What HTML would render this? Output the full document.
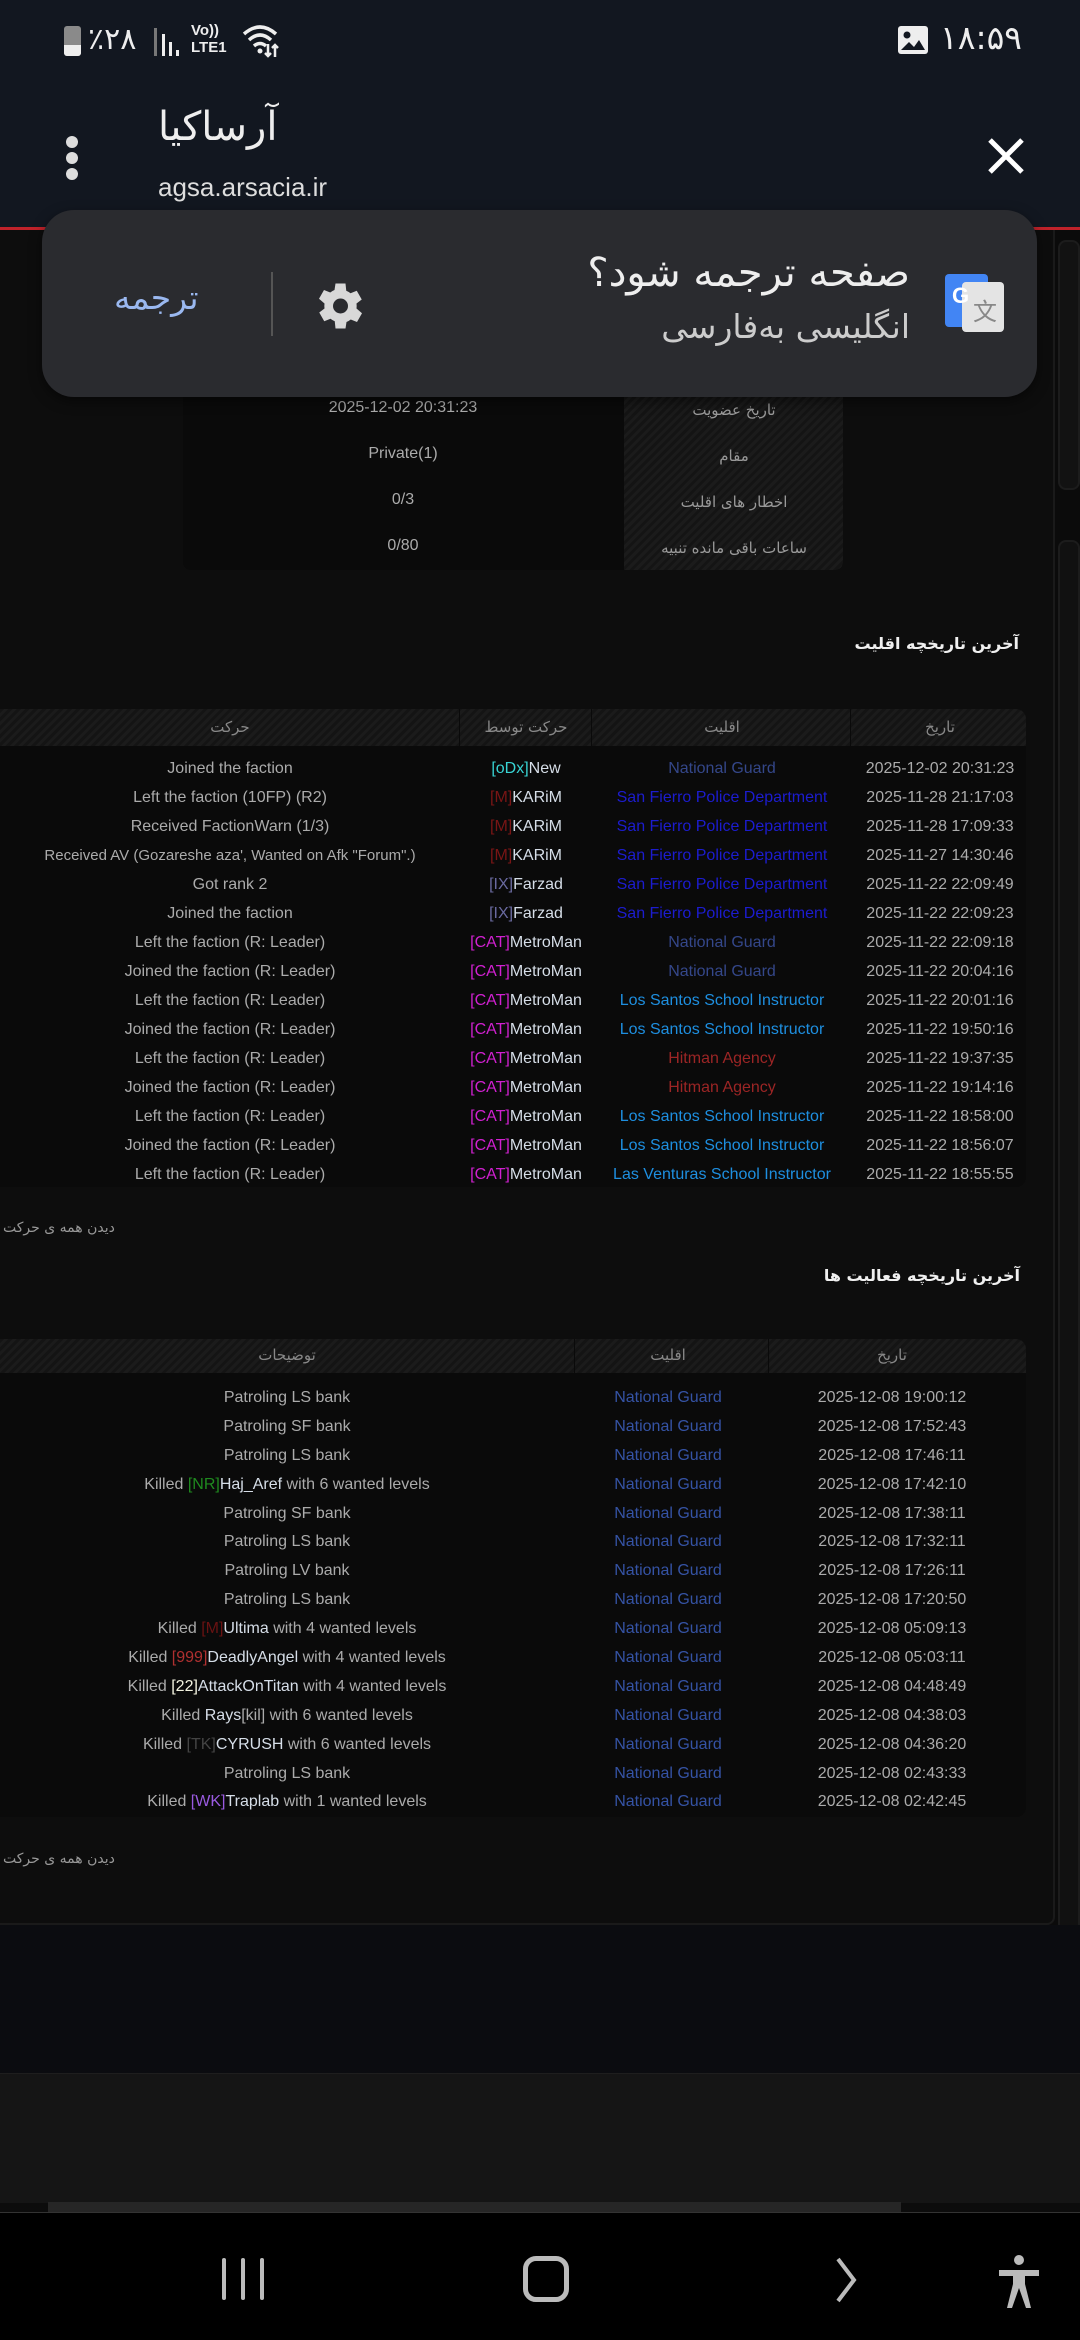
<!DOCTYPE html>
<html><head><meta charset="utf-8"><style>
*{margin:0;padding:0;box-sizing:border-box}
body{width:1080px;height:2340px;background:#0c0c0c;font-family:"Liberation Sans","Noto Sans CJK SC",sans-serif;position:relative;overflow:hidden;color:#ababab}
.a{position:absolute}
.c{position:absolute;transform:translateX(-50%);white-space:nowrap;font-size:16px;line-height:20px}
.fa{font-family:"DejaVu Sans","Noto Sans CJK SC",sans-serif}
.stripe{background:repeating-linear-gradient(135deg,#141414 0 3px,#1b1b1b 3px 6px)}
.n{color:#d6dee8}
</style></head><body>
<div class="a" style="left:0;top:228px;width:1080px;height:1700px;background:linear-gradient(90deg,#0b0b0b,#101010 50%,#0b0b0b)"></div>
<div class="a" style="left:0;top:228px;width:1055px;height:1697px;border-right:2px solid #1a1a1a;border-bottom:2px solid #1a1a1a;border-radius:0 0 8px 0;background:#0d0d0d"></div>
<div class="a" style="left:1058px;top:240px;width:22px;height:250px;border:2px solid #1c1c1c;border-radius:8px;background:#121212"></div>
<div class="a" style="left:1058px;top:540px;width:22px;height:1500px;border:2px solid #1c1c1c;border-radius:8px;background:#111"></div>
<div class="a" style="left:0;top:1925px;width:1080px;height:150px;background:#0b0c10"></div>
<div class="a" style="left:0;top:2073px;width:1080px;height:130px;background:#151515;border-top:1px solid #1e1e1e"></div>
<div class="a" style="left:48px;top:2202px;width:853px;height:10px;background:#262626"></div>

<div class="a" style="left:0;top:0;width:1080px;height:228px;background:#121720"></div>
<div class="a" style="left:0;top:227px;width:1080px;height:3px;background:#c0222a"></div>
<div class="a" style="left:64px;top:26px;width:17px;height:30px;border-radius:3px;background:#8a8a8a"></div>
<div class="a" style="left:64px;top:45px;width:17px;height:11px;background:#eee;border-radius:0 0 3px 3px"></div>
<div class="a fa" style="left:88px;top:22px;font-size:30px;color:#eee">٪۲۸</div>
<div class="a" style="left:154px;top:28px;width:3px;height:28px;background:#777"></div>
<div class="a" style="left:162px;top:34px;width:3px;height:22px;background:#eee"></div>
<div class="a" style="left:169px;top:42px;width:3px;height:14px;background:#eee"></div>
<div class="a" style="left:176px;top:50px;width:3px;height:6px;background:#eee"></div>
<div class="a" style="left:191px;top:22px;font-size:15px;font-weight:bold;color:#eee;line-height:17px">Vo))<br>LTE1</div>
<svg class="a" style="left:242px;top:24px" width="42" height="36" viewBox="0 0 42 36"><path d="M2 10 Q18 -4 34 10 M7 16 Q18 6 29 16 M12 22 Q18 17 24 22" stroke="#eee" stroke-width="3.5" fill="none"/><circle cx="18" cy="27" r="2.5" fill="#eee"/><path d="M26 20v12 M23 29l3 3 3-3 M33 33V21 M30 24l3-3 3 3" stroke="#eee" stroke-width="2.5" fill="none"/></svg>
<div class="a" style="left:898px;top:26px;width:30px;height:28px;border-radius:3px;background:#eee"></div>
<svg class="a" style="left:898px;top:26px" width="30" height="28"><circle cx="9" cy="9" r="3.5" fill="#121720"/><path d="M3 24l8-8 5 5 5-7 6 10z" fill="#121720"/></svg>
<div class="a fa" style="left:940px;top:18px;font-size:33px;color:#eee">۱۸:۵۹</div>
<div class="a" style="left:66px;top:136px;width:12px;height:12px;border-radius:6px;background:#ddd"></div>
<div class="a" style="left:66px;top:152px;width:12px;height:12px;border-radius:6px;background:#ddd"></div>
<div class="a" style="left:66px;top:168px;width:12px;height:12px;border-radius:6px;background:#ddd"></div>
<div class="a fa" style="left:158px;top:104px;font-size:40px;color:#eee;direction:rtl">آرساکیا</div>
<div class="a" style="left:158px;top:172px;font-size:26px;color:#ddd">agsa.arsacia.ir</div>
<svg class="a" style="left:986px;top:136px" width="40" height="40"><path d="M4 4L36 36M36 4L4 36" stroke="#fff" stroke-width="5"/></svg>

<div class="a" style="left:183px;top:380px;width:660px;height:190px;background:#0a0a0a;border-radius:0 0 8px 8px"></div>
<div class="a stripe" style="left:624px;top:380px;width:219px;height:190px;border-radius:0 0 8px 0"></div>
<div class="c" style="left:403px;top:398px">2025-12-02 20:31:23</div>
<div class="c" style="left:403px;top:444px">Private(1)</div>
<div class="c" style="left:403px;top:490px">0/3</div>
<div class="c" style="left:403px;top:536px">0/80</div>
<div class="c fa" style="left:734px;top:400px;font-size:15px;color:#999">تاریخ عضویت</div>
<div class="c fa" style="left:734px;top:446px;font-size:15px;color:#999">مقام</div>
<div class="c fa" style="left:734px;top:492px;font-size:15px;color:#999">اخطار های اقلیت</div>
<div class="c fa" style="left:734px;top:538px;font-size:15px;color:#999">ساعات باقی مانده تنبیه</div>

<div class="a" style="left:42px;top:210px;width:995px;height:187px;background:#2a2b2f;border-radius:32px;box-shadow:0 4px 12px rgba(0,0,0,.5)"></div>
<div class="a" style="left:945px;top:274px;width:43px;height:53px;background:#4285f4;border-radius:4px"></div>
<div class="a" style="left:962px;top:282px;width:42px;height:50px;background:#e4e4e4;border-radius:4px"></div>
<div class="a" style="left:952px;top:283px;font-size:22px;font-weight:bold;color:#fff">G</div>
<div class="a" style="left:973px;top:292px;font-size:24px;color:#888">文</div>
<div class="a fa" style="left:560px;top:250px;width:350px;text-align:right;direction:rtl;font-size:40px;color:#eee">صفحه ترجمه شود؟</div>
<div class="a fa" style="left:560px;top:307px;width:350px;text-align:right;direction:rtl;font-size:33px;color:#ccc">انگلیسی به‌فارسی</div>
<svg class="a" style="left:308px;top:276px" width="60" height="60" viewBox="0 0 24 24"><path fill="#d8d8d8" d="M19.4 13a7.5 7.5 0 000-2l2.1-1.6-2-3.5-2.5 1a7 7 0 00-1.7-1L15 3h-4l-.4 2.6a7 7 0 00-1.7 1l-2.5-1-2 3.5L6.6 11a7.5 7.5 0 000 2l-2.1 1.6 2 3.5 2.5-1a7 7 0 001.7 1L11 21h4l.4-2.6a7 7 0 001.7-1l2.5 1 2-3.5z"/><circle cx="13" cy="12" r="3" fill="#2a2b2f"/></svg>
<div class="a" style="left:271px;top:272px;width:2px;height:64px;background:#555"></div>
<div class="a fa" style="left:114px;top:278px;font-size:33px;color:#9ab8f0">ترجمه</div>

<div class="a fa" style="left:760px;top:634px;width:259px;text-align:right;direction:rtl;font-size:16px;font-weight:bold;color:#f0f0f0">آخرین تاریخچه اقلیت</div>
<div class="a" style="left:0;top:709px;width:1026px;height:478px;background:#0a0a0a;border-radius:0 10px 10px 0"></div>
<div class="a stripe" style="left:0;top:709px;width:1026px;height:37px;border-radius:0 10px 0 0"></div>
<div class="a" style="left:459px;top:709px;width:1px;height:37px;background:#0a0a0a"></div>
<div class="a" style="left:591px;top:709px;width:1px;height:37px;background:#0a0a0a"></div>
<div class="a" style="left:850px;top:709px;width:1px;height:37px;background:#0a0a0a"></div>
<div class="c fa" style="left:230px;top:717px;font-size:15px;color:#888">حرکت</div>
<div class="c fa" style="left:526px;top:717px;font-size:15px;color:#888">حرکت توسط</div>
<div class="c fa" style="left:722px;top:717px;font-size:15px;color:#888">اقلیت</div>
<div class="c fa" style="left:940px;top:717px;font-size:15px;color:#888">تاریخ</div>

<div class="a" style="left:0;top:759px;width:1026px">
<div style="position:relative;height:29px"><span class="c" style="left:230px">Joined the faction</span><span class="c" style="left:526px"><span style="color:#38d4d4">[oDx]</span><span class="n">New</span></span><span class="c" style="left:722px;color:#34478a">National Guard</span><span class="c" style="left:940px">2025-12-02 20:31:23</span></div>
<div style="position:relative;height:29px"><span class="c" style="left:230px">Left the faction (10FP) (R2)</span><span class="c" style="left:526px"><span style="color:#7a1515">[M]</span><span class="n">KARiM</span></span><span class="c" style="left:722px;color:#1c1ccf">San Fierro Police Department</span><span class="c" style="left:940px">2025-11-28 21:17:03</span></div>
<div style="position:relative;height:29px"><span class="c" style="left:230px">Received FactionWarn (1/3)</span><span class="c" style="left:526px"><span style="color:#7a1515">[M]</span><span class="n">KARiM</span></span><span class="c" style="left:722px;color:#1c1ccf">San Fierro Police Department</span><span class="c" style="left:940px">2025-11-28 17:09:33</span></div>
<div style="position:relative;height:29px"><span class="c" style="left:230px;font-size:15px">Received AV (Gozareshe aza', Wanted on Afk "Forum".)</span><span class="c" style="left:526px"><span style="color:#7a1515">[M]</span><span class="n">KARiM</span></span><span class="c" style="left:722px;color:#1c1ccf">San Fierro Police Department</span><span class="c" style="left:940px">2025-11-27 14:30:46</span></div>
<div style="position:relative;height:29px"><span class="c" style="left:230px">Got rank 2</span><span class="c" style="left:526px"><span style="color:#6a6aa0">[IX]</span><span class="n">Farzad</span></span><span class="c" style="left:722px;color:#1c1ccf">San Fierro Police Department</span><span class="c" style="left:940px">2025-11-22 22:09:49</span></div>
<div style="position:relative;height:29px"><span class="c" style="left:230px">Joined the faction</span><span class="c" style="left:526px"><span style="color:#6a6aa0">[IX]</span><span class="n">Farzad</span></span><span class="c" style="left:722px;color:#1c1ccf">San Fierro Police Department</span><span class="c" style="left:940px">2025-11-22 22:09:23</span></div>
<div style="position:relative;height:29px"><span class="c" style="left:230px">Left the faction (R: Leader)</span><span class="c" style="left:526px"><span style="color:#d020d0">[CAT]</span><span class="n">MetroMan</span></span><span class="c" style="left:722px;color:#34478a">National Guard</span><span class="c" style="left:940px">2025-11-22 22:09:18</span></div>
<div style="position:relative;height:29px"><span class="c" style="left:230px">Joined the faction (R: Leader)</span><span class="c" style="left:526px"><span style="color:#d020d0">[CAT]</span><span class="n">MetroMan</span></span><span class="c" style="left:722px;color:#34478a">National Guard</span><span class="c" style="left:940px">2025-11-22 20:04:16</span></div>
<div style="position:relative;height:29px"><span class="c" style="left:230px">Left the faction (R: Leader)</span><span class="c" style="left:526px"><span style="color:#d020d0">[CAT]</span><span class="n">MetroMan</span></span><span class="c" style="left:722px;color:#1e8fe0">Los Santos School Instructor</span><span class="c" style="left:940px">2025-11-22 20:01:16</span></div>
<div style="position:relative;height:29px"><span class="c" style="left:230px">Joined the faction (R: Leader)</span><span class="c" style="left:526px"><span style="color:#d020d0">[CAT]</span><span class="n">MetroMan</span></span><span class="c" style="left:722px;color:#1e8fe0">Los Santos School Instructor</span><span class="c" style="left:940px">2025-11-22 19:50:16</span></div>
<div style="position:relative;height:29px"><span class="c" style="left:230px">Left the faction (R: Leader)</span><span class="c" style="left:526px"><span style="color:#d020d0">[CAT]</span><span class="n">MetroMan</span></span><span class="c" style="left:722px;color:#9c2525">Hitman Agency</span><span class="c" style="left:940px">2025-11-22 19:37:35</span></div>
<div style="position:relative;height:29px"><span class="c" style="left:230px">Joined the faction (R: Leader)</span><span class="c" style="left:526px"><span style="color:#d020d0">[CAT]</span><span class="n">MetroMan</span></span><span class="c" style="left:722px;color:#9c2525">Hitman Agency</span><span class="c" style="left:940px">2025-11-22 19:14:16</span></div>
<div style="position:relative;height:29px"><span class="c" style="left:230px">Left the faction (R: Leader)</span><span class="c" style="left:526px"><span style="color:#d020d0">[CAT]</span><span class="n">MetroMan</span></span><span class="c" style="left:722px;color:#1e8fe0">Los Santos School Instructor</span><span class="c" style="left:940px">2025-11-22 18:58:00</span></div>
<div style="position:relative;height:29px"><span class="c" style="left:230px">Joined the faction (R: Leader)</span><span class="c" style="left:526px"><span style="color:#d020d0">[CAT]</span><span class="n">MetroMan</span></span><span class="c" style="left:722px;color:#1e8fe0">Los Santos School Instructor</span><span class="c" style="left:940px">2025-11-22 18:56:07</span></div>
<div style="position:relative;height:29px"><span class="c" style="left:230px">Left the faction (R: Leader)</span><span class="c" style="left:526px"><span style="color:#d020d0">[CAT]</span><span class="n">MetroMan</span></span><span class="c" style="left:722px;color:#1e8fe0">Las Venturas School Instructor</span><span class="c" style="left:940px">2025-11-22 18:55:55</span></div>
</div>
<div class="a fa" style="left:3px;top:1220px;font-size:14px;color:#999;direction:rtl">دیدن همه ی حرکت</div>

<div class="a fa" style="left:700px;top:1266px;width:320px;text-align:right;direction:rtl;font-size:16px;font-weight:bold;color:#f0f0f0">آخرین تاریخچه فعالیت ها</div>
<div class="a" style="left:0;top:1339px;width:1026px;height:478px;background:#0a0a0a;border-radius:0 10px 10px 0"></div>
<div class="a stripe" style="left:0;top:1339px;width:1026px;height:34px;border-radius:0 10px 0 0"></div>
<div class="a" style="left:574px;top:1339px;width:1px;height:34px;background:#0a0a0a"></div>
<div class="a" style="left:768px;top:1339px;width:1px;height:34px;background:#0a0a0a"></div>
<div class="c fa" style="left:287px;top:1345px;font-size:15px;color:#888">توضیحات</div>
<div class="c fa" style="left:668px;top:1345px;font-size:15px;color:#888">اقلیت</div>
<div class="c fa" style="left:892px;top:1345px;font-size:15px;color:#888">تاریخ</div>

<div class="a" style="left:0;top:1388px;width:1026px">
<div style="position:relative;height:28.9px"><span class="c" style="left:287px">Patroling LS bank</span><span class="c" style="left:668px;color:#3553a5">National Guard</span><span class="c" style="left:892px">2025-12-08 19:00:12</span></div>
<div style="position:relative;height:28.9px"><span class="c" style="left:287px">Patroling SF bank</span><span class="c" style="left:668px;color:#3553a5">National Guard</span><span class="c" style="left:892px">2025-12-08 17:52:43</span></div>
<div style="position:relative;height:28.9px"><span class="c" style="left:287px">Patroling LS bank</span><span class="c" style="left:668px;color:#3553a5">National Guard</span><span class="c" style="left:892px">2025-12-08 17:46:11</span></div>
<div style="position:relative;height:28.9px"><span class="c" style="left:287px">Killed <span style="color:#1f8a1f">[NR]</span><span class="n">Haj_Aref</span> with 6 wanted levels</span><span class="c" style="left:668px;color:#3553a5">National Guard</span><span class="c" style="left:892px">2025-12-08 17:42:10</span></div>
<div style="position:relative;height:28.9px"><span class="c" style="left:287px">Patroling SF bank</span><span class="c" style="left:668px;color:#3553a5">National Guard</span><span class="c" style="left:892px">2025-12-08 17:38:11</span></div>
<div style="position:relative;height:28.9px"><span class="c" style="left:287px">Patroling LS bank</span><span class="c" style="left:668px;color:#3553a5">National Guard</span><span class="c" style="left:892px">2025-12-08 17:32:11</span></div>
<div style="position:relative;height:28.9px"><span class="c" style="left:287px">Patroling LV bank</span><span class="c" style="left:668px;color:#3553a5">National Guard</span><span class="c" style="left:892px">2025-12-08 17:26:11</span></div>
<div style="position:relative;height:28.9px"><span class="c" style="left:287px">Patroling LS bank</span><span class="c" style="left:668px;color:#3553a5">National Guard</span><span class="c" style="left:892px">2025-12-08 17:20:50</span></div>
<div style="position:relative;height:28.9px"><span class="c" style="left:287px">Killed <span style="color:#6a1212">[M]</span><span class="n">Ultima</span> with 4 wanted levels</span><span class="c" style="left:668px;color:#3553a5">National Guard</span><span class="c" style="left:892px">2025-12-08 05:09:13</span></div>
<div style="position:relative;height:28.9px"><span class="c" style="left:287px">Killed <span style="color:#b03030">[999]</span><span class="n">DeadlyAngel</span> with 4 wanted levels</span><span class="c" style="left:668px;color:#3553a5">National Guard</span><span class="c" style="left:892px">2025-12-08 05:03:11</span></div>
<div style="position:relative;height:28.9px"><span class="c" style="left:287px">Killed <span style="color:#f4f4e0">[22]</span><span class="n">AttackOnTitan</span> with 4 wanted levels</span><span class="c" style="left:668px;color:#3553a5">National Guard</span><span class="c" style="left:892px">2025-12-08 04:48:49</span></div>
<div style="position:relative;height:28.9px"><span class="c" style="left:287px">Killed <span class="n">Rays</span>[kil] with 6 wanted levels</span><span class="c" style="left:668px;color:#3553a5">National Guard</span><span class="c" style="left:892px">2025-12-08 04:38:03</span></div>
<div style="position:relative;height:28.9px"><span class="c" style="left:287px">Killed <span style="color:#444">[TK]</span><span class="n">CYRUSH</span> with 6 wanted levels</span><span class="c" style="left:668px;color:#3553a5">National Guard</span><span class="c" style="left:892px">2025-12-08 04:36:20</span></div>
<div style="position:relative;height:28.9px"><span class="c" style="left:287px">Patroling LS bank</span><span class="c" style="left:668px;color:#3553a5">National Guard</span><span class="c" style="left:892px">2025-12-08 02:43:33</span></div>
<div style="position:relative;height:28.9px"><span class="c" style="left:287px">Killed <span style="color:#9a5ae0">[WK]</span><span class="n">Traplab</span> with 1 wanted levels</span><span class="c" style="left:668px;color:#3553a5">National Guard</span><span class="c" style="left:892px">2025-12-08 02:42:45</span></div>
</div>
<div class="a fa" style="left:3px;top:1851px;font-size:14px;color:#999;direction:rtl">دیدن همه ی حرکت</div>

<div class="a" style="left:0;top:2212px;width:1080px;height:128px;background:#000;border-top:1px solid #333"></div>
<div class="a" style="left:222px;top:2258px;width:4px;height:42px;background:#bbb;border-radius:2px"></div>
<div class="a" style="left:241px;top:2258px;width:4px;height:42px;background:#bbb;border-radius:2px"></div>
<div class="a" style="left:260px;top:2258px;width:4px;height:42px;background:#bbb;border-radius:2px"></div>
<div class="a" style="left:523px;top:2256px;width:46px;height:46px;border:5px solid #bbb;border-radius:13px"></div>
<svg class="a" style="left:832px;top:2256px" width="30" height="48"><path d="M6 3L22 24 6 45" stroke="#bbb" stroke-width="4" fill="none"/></svg>
<svg class="a" style="left:996px;top:2254px" width="46" height="56"><circle cx="23" cy="6" r="5" fill="#bbb"/><path d="M3 16h40v6H29v8l6 24h-5l-7-20-7 20h-5l6-24v-8H3z" fill="#bbb"/></svg>
</body></html>
